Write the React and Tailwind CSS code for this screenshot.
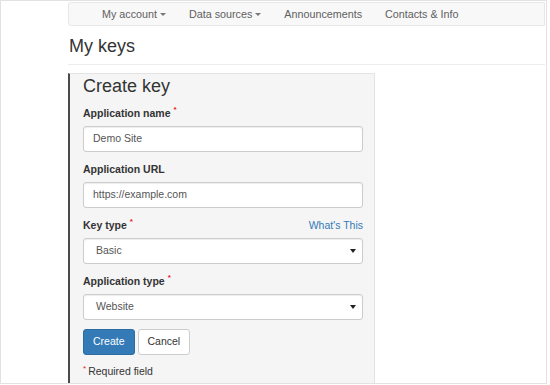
import React from "react";

const Caret = () => (
  <span className="inline-block ml-[3px] w-0 h-0 border-l-[3px] border-r-[3px] border-t-[3px] border-l-transparent border-r-transparent border-t-[#777] align-middle" />
);

const Req = () => (
  <span className="text-[#e51c23] text-[8px] leading-none relative top-[-5px] ml-[3px]">*</span>
);

const Label = ({ children, req, right }) => (
  <div className="flex items-center justify-between h-[15px] leading-[15px] mb-[4.5px]">
    <span className="font-bold text-[#333]">
      {children}
      {req && <Req />}
    </span>
    {right}
  </div>
);

const Input = ({ value }) => (
  <div className="h-[26px] bg-white border border-[#ccc] rounded-[3px] shadow-[inset_0_1px_1px_rgba(0,0,0,0.075)] flex items-center pl-[9px] text-[#555]">
    {value}
  </div>
);

const Select = ({ value }) => (
  <div className="h-[26px] bg-white border border-[#ccc] rounded-[3px] shadow-[inset_0_1px_1px_rgba(0,0,0,0.075)] flex items-center justify-between pl-[12px] pr-[6px] text-[#555]">
    <span>{value}</span>
    <svg width="6" height="4" viewBox="0 0 6 4">
      <path d="M0 0 L6 0 L3 4 Z" fill="#222" />
    </svg>
  </div>
);

export default function App() {
  return (
    <div
      className="w-[547px] h-[384px] border border-[#e2e2e2] bg-white overflow-hidden text-[10.5px] text-[#333]"
      style={{ fontFamily: '"Liberation Sans", Arial, sans-serif' }}
    >
      <div className="flex flex-col h-full pl-[67px] pr-[1px]">
        <div className="mt-[1px] h-[24px] shrink-0 border border-[#e7e7e7] bg-[#f8f8f8] rounded-l-[3px] flex items-center pl-[33px] gap-[23px] text-[10.75px] text-[#606060]">
          <span className="flex items-center">My account <Caret /></span>
          <span className="flex items-center">Data sources <Caret /></span>
          <span>Announcements</span>
          <span>Contacts &amp; Info</span>
        </div>
        <h1 className="mt-[9.5px] text-[18px] leading-[20px] text-[#333] pl-[1px] shrink-0">My keys</h1>
        <div className="mt-[8px] border-t border-[#eee] shrink-0" />
        <div className="mt-[8px] w-[307px] flex-1 bg-[#f5f5f5] border-t border-r border-[#e3e3e3] border-l-[2px] border-l-[#4a4a4a] pl-[13px] pr-[11px] pt-[2px]">
          <h3 className="text-[18px] leading-[20px] text-[#333] mb-[10.5px]">Create key</h3>

          <Label req>Application name</Label>
          <Input value="Demo Site" />

          <div className="mt-[10.5px]">
            <Label>Application URL</Label>
            <Input value="https://example.com" />
          </div>

          <div className="mt-[10.5px]">
            <Label req right={<span className="text-[#337ab7]">What's This</span>}>Key type</Label>
            <Select value="Basic" />
          </div>

          <div className="mt-[10.5px]">
            <Label req>Application type</Label>
            <Select value="Website" />
          </div>

          <div className="mt-[9.5px] flex gap-[3px]">
            <button className="h-[25.5px] px-[9px] bg-[#337ab7] border border-[#2e6da4] rounded-[3px] text-white">Create</button>
            <button className="h-[25.5px] px-[9px] bg-white border border-[#ccc] rounded-[3px] text-[#333]">Cancel</button>
          </div>

          <div className="mt-[9.5px] leading-[15px] text-[#333]">
            <span className="text-[#e51c23] text-[8px] relative top-[-4px] mr-[2px]">*</span>
            Required field
          </div>
        </div>
      </div>
    </div>
  );
}
